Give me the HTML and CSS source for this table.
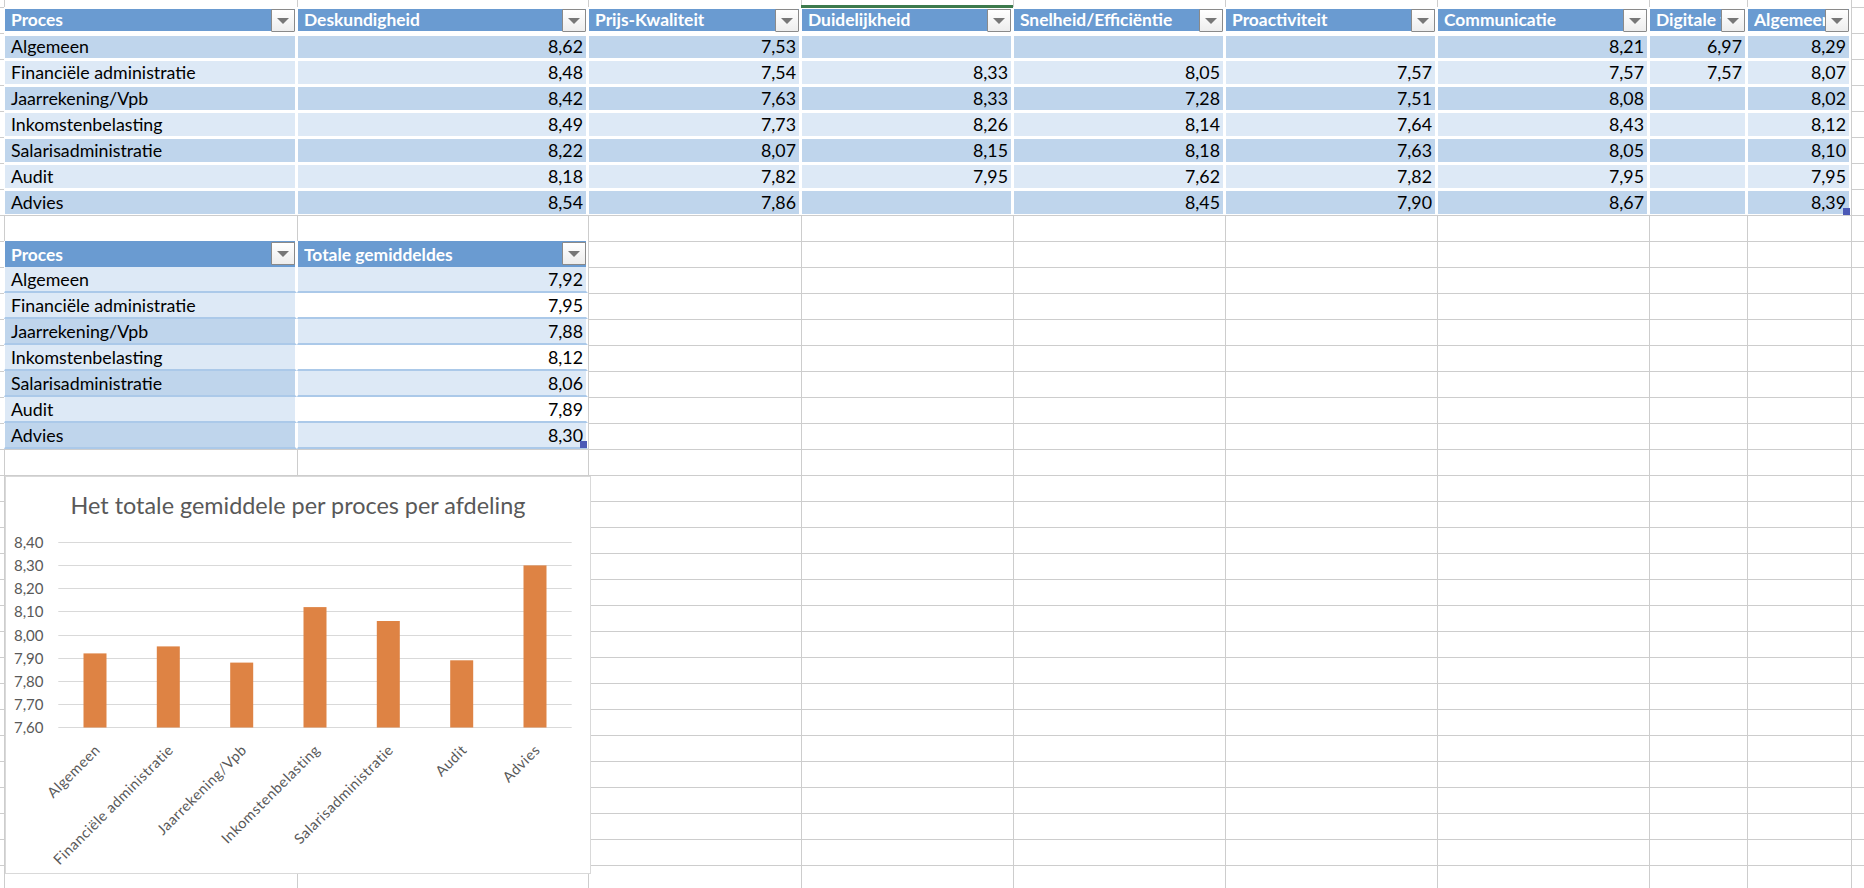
FILE: index.html
```html
<!DOCTYPE html>
<html lang="nl">
<head>
<meta charset="utf-8">
<title>Gemiddelden per proces</title>
<link rel="stylesheet" href="styles.css">
</head>
<body>
<div class="sheet">
  <div class="tbl t1">
    <div class="row head">
      <div class="hc"><span class="ht">Proces</span><i class="dd"></i></div>
      <div class="hc"><span class="ht">Deskundigheid</span><i class="dd"></i></div>
      <div class="hc"><span class="ht">Prijs-Kwaliteit</span><i class="dd"></i></div>
      <div class="hc"><span class="ht">Duidelijkheid</span><i class="dd"></i></div>
      <div class="hc"><span class="ht">Snelheid/Efficiëntie</span><i class="dd"></i></div>
      <div class="hc"><span class="ht">Proactiviteit</span><i class="dd"></i></div>
      <div class="hc"><span class="ht">Communicatie</span><i class="dd"></i></div>
      <div class="hc"><span class="ht">Digitale toegankelijkheid</span><i class="dd"></i></div>
      <div class="hc"><span class="ht">Algemeen gemiddelde</span><i class="dd"></i></div>
    </div>
    <div class="row dk first">
      <div class="cell">Algemeen</div><div class="cell num">8,62</div><div class="cell num">7,53</div><div class="cell num"></div><div class="cell num"></div><div class="cell num"></div><div class="cell num">8,21</div><div class="cell num">6,97</div><div class="cell num">8,29</div>
    </div>
    <div class="row lt">
      <div class="cell">Financiële administratie</div><div class="cell num">8,48</div><div class="cell num">7,54</div><div class="cell num">8,33</div><div class="cell num">8,05</div><div class="cell num">7,57</div><div class="cell num">7,57</div><div class="cell num">7,57</div><div class="cell num">8,07</div>
    </div>
    <div class="row dk">
      <div class="cell">Jaarrekening/Vpb</div><div class="cell num">8,42</div><div class="cell num">7,63</div><div class="cell num">8,33</div><div class="cell num">7,28</div><div class="cell num">7,51</div><div class="cell num">8,08</div><div class="cell num"></div><div class="cell num">8,02</div>
    </div>
    <div class="row lt">
      <div class="cell">Inkomstenbelasting</div><div class="cell num">8,49</div><div class="cell num">7,73</div><div class="cell num">8,26</div><div class="cell num">8,14</div><div class="cell num">7,64</div><div class="cell num">8,43</div><div class="cell num"></div><div class="cell num">8,12</div>
    </div>
    <div class="row dk">
      <div class="cell">Salarisadministratie</div><div class="cell num">8,22</div><div class="cell num">8,07</div><div class="cell num">8,15</div><div class="cell num">8,18</div><div class="cell num">7,63</div><div class="cell num">8,05</div><div class="cell num"></div><div class="cell num">8,10</div>
    </div>
    <div class="row lt">
      <div class="cell">Audit</div><div class="cell num">8,18</div><div class="cell num">7,82</div><div class="cell num">7,95</div><div class="cell num">7,62</div><div class="cell num">7,82</div><div class="cell num">7,95</div><div class="cell num"></div><div class="cell num">7,95</div>
    </div>
    <div class="row dk">
      <div class="cell">Advies</div><div class="cell num">8,54</div><div class="cell num">7,86</div><div class="cell num"></div><div class="cell num">8,45</div><div class="cell num">7,90</div><div class="cell num">8,67</div><div class="cell num"></div><div class="cell num last">8,39<i class="grip"></i></div>
    </div>
  </div>

  <div class="tbl t2">
    <div class="row head">
      <div class="hc"><span class="ht">Proces</span><i class="dd"></i></div>
      <div class="hc"><span class="ht">Totale gemiddeldes</span><i class="dd"></i></div>
    </div>
    <div class="row">
      <div class="cell lt">Algemeen</div><div class="cell num lt">7,92</div>
    </div>
    <div class="row">
      <div class="cell lt">Financiële administratie</div><div class="cell num wh">7,95</div>
    </div>
    <div class="row">
      <div class="cell dk">Jaarrekening/Vpb</div><div class="cell num lt">7,88</div>
    </div>
    <div class="row">
      <div class="cell lt">Inkomstenbelasting</div><div class="cell num wh">8,12</div>
    </div>
    <div class="row">
      <div class="cell dk">Salarisadministratie</div><div class="cell num lt">8,06</div>
    </div>
    <div class="row">
      <div class="cell lt">Audit</div><div class="cell num wh">7,89</div>
    </div>
    <div class="row">
      <div class="cell dk">Advies</div><div class="cell num lt last">8,30<i class="grip"></i></div>
    </div>
  </div>

  <div class="sel"></div>

  <div class="chart">
    <svg width="586" height="398" viewBox="0 0 586 398">
      <text class="ctitle" x="293" y="38" text-anchor="middle">Het totale gemiddele per proces per afdeling</text>
      <g class="grid">
        <line x1="53.3" x2="566.7" y1="66.5" y2="66.5"/>
        <line x1="53.3" x2="566.7" y1="89.5" y2="89.5"/>
        <line x1="53.3" x2="566.7" y1="112.5" y2="112.5"/>
        <line x1="53.3" x2="566.7" y1="135.5" y2="135.5"/>
        <line x1="53.3" x2="566.7" y1="159.5" y2="159.5"/>
        <line x1="53.3" x2="566.7" y1="182.5" y2="182.5"/>
        <line x1="53.3" x2="566.7" y1="205.5" y2="205.5"/>
        <line x1="53.3" x2="566.7" y1="228.5" y2="228.5"/>
        <line x1="53.3" x2="566.7" y1="251.5" y2="251.5"/>
      </g>
      <g class="ylab">
        <text x="38.5" y="71.5">8,40</text>
        <text x="38.5" y="94.5">8,30</text>
        <text x="38.5" y="117.5">8,20</text>
        <text x="38.5" y="140.5">8,10</text>
        <text x="38.5" y="164.5">8,00</text>
        <text x="38.5" y="187.5">7,90</text>
        <text x="38.5" y="210.5">7,80</text>
        <text x="38.5" y="233.5">7,70</text>
        <text x="38.5" y="256.5">7,60</text>
      </g>
      <g class="bars">
        <rect x="78.5" y="177.4" width="23" height="74.1"/>
        <rect x="151.8" y="170.4" width="23" height="81.1"/>
        <rect x="225.2" y="186.6" width="23" height="64.9"/>
        <rect x="298.5" y="131.1" width="23" height="120.4"/>
        <rect x="371.8" y="145.0" width="23" height="106.5"/>
        <rect x="445.2" y="184.3" width="23" height="67.2"/>
        <rect x="518.5" y="89.4" width="23" height="162.1"/>
      </g>
      <g class="xlab">
        <text transform="translate(96 275) rotate(-45)">Algemeen</text>
        <text transform="translate(169.3 275) rotate(-45)">Financiële administratie</text>
        <text transform="translate(242.7 275) rotate(-45)">Jaarrekening/Vpb</text>
        <text transform="translate(316 275) rotate(-45)">Inkomstenbelasting</text>
        <text transform="translate(389.3 275) rotate(-45)">Salarisadministratie</text>
        <text transform="translate(462.7 275) rotate(-45)">Audit</text>
        <text transform="translate(536 275) rotate(-45)">Advies</text>
      </g>
    </svg>
  </div>
</div>
</body>
</html>
```

FILE: styles.css
```css
* { box-sizing: border-box; }

html, body {
  margin: 0;
  padding: 0;
  background: #fff;
}

body {
  width: 1864px;
  height: 888px;
  overflow: hidden;
  font-family: "Lato", "Open Sans", sans-serif;
  color: #000;
}

.sheet {
  position: relative;
  display: grid;
  grid-template-columns: 4px 293px 291px 213px 212px 212px 212px 212px 98px 104px 1fr;
  grid-template-rows: 7px repeat(34, 26px);
  width: 1864px;
  height: 888px;
  overflow: hidden;
  background:
    linear-gradient(#cdcdcd, #cdcdcd) 4px 0 / 1px 100% no-repeat,
    linear-gradient(#cdcdcd, #cdcdcd) 297px 0 / 1px 100% no-repeat,
    linear-gradient(#cdcdcd, #cdcdcd) 588px 0 / 1px 100% no-repeat,
    linear-gradient(#cdcdcd, #cdcdcd) 801px 0 / 1px 100% no-repeat,
    linear-gradient(#cdcdcd, #cdcdcd) 1013px 0 / 1px 100% no-repeat,
    linear-gradient(#cdcdcd, #cdcdcd) 1225px 0 / 1px 100% no-repeat,
    linear-gradient(#cdcdcd, #cdcdcd) 1437px 0 / 1px 100% no-repeat,
    linear-gradient(#cdcdcd, #cdcdcd) 1649px 0 / 1px 100% no-repeat,
    linear-gradient(#cdcdcd, #cdcdcd) 1747px 0 / 1px 100% no-repeat,
    linear-gradient(#cdcdcd, #cdcdcd) 1851px 0 / 1px 100% no-repeat,
    linear-gradient(#cdcdcd 0 1px, transparent 1px) 0 7px / 100% 26px #fff;
}

/* ---------- tables ---------- */
.tbl {
  display: grid;
  grid-auto-rows: 26px;
  background: #fff;
  font-size: 17.8px;
}

.t1 {
  grid-column: 2 / 11;
  grid-row: 2 / 10;
  grid-template-columns: 293px 291px 213px 212px 212px 212px 212px 98px 104px;
}

.t2 {
  grid-column: 2 / 4;
  grid-row: 11 / 19;
  grid-template-columns: 293px 291px;
}

.row { display: contents; }

.hc {
  position: relative;
  background: #6a9bd1;
  color: #fff;
  font-weight: 700;
  font-size: 17.4px;
  border: solid #fff;
  border-width: 2px 2px 2px 1px;
  padding-left: 6px;
  line-height: 21px;
}

.ht {
  display: block;
  overflow: hidden;
  white-space: nowrap;
}

.dd {
  position: absolute;
  right: 0;
  top: 0;
  width: 24px;
  height: 23px;
  background: linear-gradient(#ffffff, #ededed);
  border: 1px solid #8a8a8a;
  border-radius: 1px;
}

.dd::after {
  content: "";
  position: absolute;
  left: 5px;
  top: 8px;
  border-left: 6px solid transparent;
  border-right: 6px solid transparent;
  border-top: 6px solid #777;
}

.cell {
  position: relative;
  border: solid #fff;
  border-width: 2px 2px 1px 1px;
  padding: 0 3px 0 6px;
  line-height: 23px;
  white-space: nowrap;
  overflow: hidden;
}

.num { text-align: right; }

.t1 .first > .cell {
  border-top-width: 3px;
  line-height: 21px;
}

.dk > .cell, .cell.dk { background: #bfd5ec; }
.lt > .cell, .cell.lt { background: #dde9f6; }
.cell.wh { background: #fff; }

.t2 .hc {
  border-width: 0 2px 0 1px;
  line-height: 23px;
  padding-top: 2px;
}

.t2 .hc .dd { top: 1px; }

.t2 .cell {
  border-width: 0 2px 2px 1px;
  border-bottom-color: #abc9e9;
  padding-top: 1px;
  line-height: 23px;
}

.cell.last { overflow: visible; }

.grip {
  position: absolute;
  right: -1px;
  bottom: -1px;
  width: 7px;
  height: 7px;
  background: #4b59b6;
}

/* active column marker */
.sel {
  position: absolute;
  left: 801px;
  top: 5px;
  width: 212px;
  height: 3px;
  background: #3d7a4c;
}

/* ---------- chart ---------- */
.chart {
  position: absolute;
  left: 5px;
  top: 476px;
  width: 586px;
  height: 398px;
  background: #fff;
  border: 1px solid #d9d9d9;
}

.chart svg {
  position: absolute;
  left: -1px;
  top: -1px;
  display: block;
}

.ctitle {
  font-family: "Lato", "Open Sans", sans-serif;
  font-size: 23.4px;
  fill: #595959;
}

.grid line {
  stroke: #d9d9d9;
  stroke-width: 1;
}

.ylab text {
  font-family: "Lato", "Open Sans", sans-serif;
  font-size: 15px;
  fill: #595959;
  text-anchor: end;
}

.bars rect { fill: #de8344; }

.xlab text {
  font-family: "Lato", "Open Sans", sans-serif;
  font-size: 14.5px;
  letter-spacing: 0.5px;
  fill: #595959;
  text-anchor: end;
}
```
